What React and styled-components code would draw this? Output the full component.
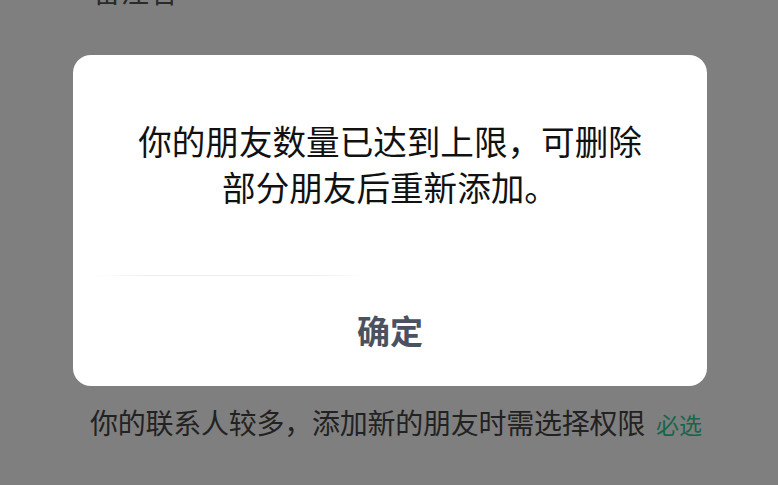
import React from "react";
import styled, { createGlobalStyle } from "styled-components";

const GlobalStyle = createGlobalStyle`
  html, body {
    margin: 0;
    padding: 0;
    background: #7f7f7f;
    overflow: hidden;
  }
  body {
    font-family: "Noto Sans CJK SC", "Noto Sans", sans-serif;
  }
`;

const Screen = styled.div`
  width: 778px;
  height: 485px;
  background: #7f7f7f;
  display: flex;
  flex-direction: column;
  overflow: hidden;
`;

const TopLabel = styled.div`
  margin: -23px 0 0 93px;
  font-size: 28px;
  line-height: 28px;
  color: #2a2a2a;
`;

const Dialog = styled.div`
  margin: 50px 0 0 73px;
  width: 634px;
  height: 331px;
  background: #ffffff;
  border-radius: 18px;
  display: flex;
  flex-direction: column;
  overflow: hidden;
`;

const Message = styled.div`
  padding: 63px 50px 0;
  height: 157px;
  font-size: 33.6px;
  font-weight: 400;
  line-height: 46px;
  color: #111111;
  text-align: center;
`;

const Divider = styled.div`
  height: 1px;
  margin: 0 340px 0 22px;
  background: linear-gradient(90deg, rgba(235, 235, 235, 0) 0%, #ededed 20%, #ededed 80%, rgba(235, 235, 235, 0) 100%);
`;

const ConfirmButton = styled.button`
  flex: 1;
  border: none;
  background: transparent;
  font-family: inherit;
  font-size: 33px;
  font-weight: 700;
  color: #4a5262;
  padding: 0 0 2px;
  cursor: pointer;
`;

const HintRow = styled.div`
  margin: 18px 0 0 90px;
  display: flex;
  align-items: center;
  gap: 11px;
  height: 36px;
`;

const HintText = styled.span`
  font-size: 28px;
  letter-spacing: -0.25px;
  color: #222222;
  white-space: nowrap;
`;

const Required = styled.span`
  font-size: 23px;
  color: #17664a;
  white-space: nowrap;
  padding-top: 3px;
`;

export default function App() {
  return (
    <>
      <GlobalStyle />
      <Screen>
        <TopLabel>备注名</TopLabel>
        <Dialog>
          <Message>你的朋友数量已达到上限，可删除部分朋友后重新添加。</Message>
          <Divider />
          <ConfirmButton>确定</ConfirmButton>
        </Dialog>
        <HintRow>
          <HintText>你的联系人较多，添加新的朋友时需选择权限</HintText>
          <Required>必选</Required>
        </HintRow>
      </Screen>
    </>
  );
}
